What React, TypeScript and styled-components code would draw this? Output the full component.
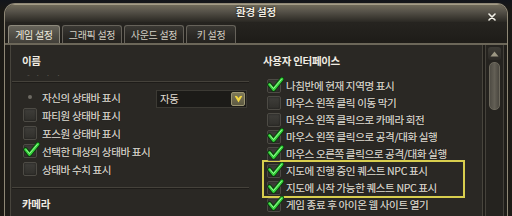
import React from 'react';
import styled, {createGlobalStyle} from 'styled-components';

const GlobalStyle = createGlobalStyle`
	html, body {
		margin: 0;
		padding: 0;
		background: #14130f;
	}
	body {
		font-family: "Noto Sans CJK KR", "Noto Sans", sans-serif;
	}
`;

type Option = {
	label: string;
	checked: boolean;
	highlight?: boolean;
};

const leftOptions: Option[] = [
	{label: '파티원 상태바 표시', checked: false},
	{label: '포스원 상태바 표시', checked: false},
	{label: '선택한 대상의 상태바 표시', checked: true},
	{label: '상태바 수치 표시', checked: false},
];

const rightOptions: Option[] = [
	{label: '나침반에 현재 지역명 표시', checked: true},
	{label: '마우스 왼쪽 클릭 이동 막기', checked: false},
	{label: '마우스 왼쪽 클릭으로 카메라 회전', checked: false},
	{label: '마우스 왼쪽 클릭으로 공격/대화 실행', checked: true},
	{label: '마우스 오른쪽 클릭으로 공격/대화 실행', checked: true},
	{label: '지도에 진행 중인 퀘스트 NPC 표시', checked: true, highlight: true},
	{label: '지도에 시작 가능한 퀘스트 NPC 표시', checked: true, highlight: true},
	{label: '게임 종료 후 아이온 웹 사이트 열기', checked: true},
];

const tabs = [
	{label: '게임 설정', width: 52, active: true},
	{label: '그래픽 설정', width: 60, active: false},
	{label: '사운드 설정', width: 60, active: false},
	{label: '키 설정', width: 50, active: false},
];

const CheckMark = () => (
	<svg width="17" height="15" viewBox="0 0 17 15">
		<path d="M2.5 7.5 L6.5 12.5 L15 2" fill="none" stroke="#0b3a0c" strokeWidth="4.6" strokeLinecap="round" strokeLinejoin="round"/>
		<path d="M2.5 7.5 L6.5 12.5 L15 2" fill="none" stroke="#34d23a" strokeWidth="2.8" strokeLinecap="round" strokeLinejoin="round"/>
		<path d="M3.2 7.6 L6.5 11.6 L14.4 2.4" fill="none" stroke="#a8f7a4" strokeWidth="0.9" strokeLinecap="round" strokeLinejoin="round"/>
	</svg>
);

const Checkbox = ({checked}: {checked: boolean}) => (
	<Box>
		{checked && <Check><CheckMark/></Check>}
	</Box>
);

const OptionRow = ({option, pitch}: {option: Option; pitch: number}) => (
	<Row pitch={pitch}>
		<Checkbox checked={option.checked}/>
		<Label>{option.label}</Label>
	</Row>
);

const App = () => {
	const plain = rightOptions.slice(0, 5);
	const marked = rightOptions.filter(o => o.highlight);
	const rest = rightOptions.slice(7);

	return (
		<>
			<GlobalStyle/>
			<Screen>
				<Window>
					<TitleBar>
						<span/>
						<Title>환경 설정</Title>
						<Close aria-label="닫기">
							<svg width="8" height="8" viewBox="0 0 8 8">
								<path d="M1 1 L7 7 M7 1 L1 7" stroke="#f2f0e8" strokeWidth="1.6" strokeLinecap="round"/>
							</svg>
						</Close>
					</TitleBar>
					<TabBar>
						{tabs.map(tab => (
							<Tab key={tab.label} active={tab.active} width={tab.width}>{tab.label}</Tab>
						))}
					</TabBar>
					<Body>
						<Panels>
							<LeftColumn>
								<Heading>이름</Heading>
								<DimRow>- · · ·</DimRow>
								<Separator/>
								<Row pitch={18}>
									<DotSlot><Dot/></DotSlot>
									<Label>자신의 상태바 표시</Label>
									<Select>
										<SelectText>자동</SelectText>
										<SelectArrow>
											<svg width="9" height="8" viewBox="0 0 9 8">
												<path d="M0.8 1.2 Q2.5 0 4.5 3 Q6.5 0 8.2 1.2 L4.5 7.4 Z" fill="#f2d640"/>
											</svg>
										</SelectArrow>
									</Select>
								</Row>
								{leftOptions.map(o => <OptionRow key={o.label} option={o} pitch={18}/>)}
								<Separator gap={9}/>
								<Heading gap={2}>카메라</Heading>
								<Separator gap={8}/>
							</LeftColumn>
							<RightColumn>
								<Heading>사용자 인터페이스</Heading>
								<List>
									{plain.map(o => <OptionRow key={o.label} option={o} pitch={17}/>)}
									<Highlight>
										{marked.map(o => <OptionRow key={o.label} option={o} pitch={17}/>)}
									</Highlight>
									{rest.map(o => <OptionRow key={o.label} option={o} pitch={17}/>)}
								</List>
							</RightColumn>
						</Panels>
						<Scrollbar>
							<ScrollUp>
								<svg width="9" height="6" viewBox="0 0 9 6">
									<path d="M4.5 0.5 L8.5 5.5 L0.5 5.5 Z" fill="#9d9884"/>
								</svg>
							</ScrollUp>
							<Thumb/>
						</Scrollbar>
					</Body>
				</Window>
			</Screen>
		</>
	);
};

const Screen = styled.div`
	width: 512px;
	height: 216px;
	overflow: hidden;
	box-sizing: border-box;
	padding: 3px 4px 0 4px;
	background: linear-gradient(180deg, #12151b 0, #1a1915 10px, #1e1b16 100%);
`;

const Window = styled.div`
	width: 504px;
	height: 240px;
	box-sizing: border-box;
	display: flex;
	flex-direction: column;
	border: 1px solid #8f8876;
	border-bottom: none;
	border-radius: 11px 11px 0 0;
	background: #1f1d19;
	overflow: hidden;
`;

const TitleBar = styled.div`
	height: 18px;
	display: grid;
	grid-template-columns: 1fr auto 1fr;
	align-items: center;
	background: linear-gradient(180deg, #736e5c 0%, #57534a 40%, #3d3a33 75%, #2a2823 100%);
	box-shadow: inset 0 1px 0 #a39c86;
`;

const Title = styled.div`
	font-size: 10.5px;
	font-weight: bold;
	letter-spacing: -0.2px;
	color: #f1ede2;
	line-height: 18px;
	margin-top: -3px;
	text-shadow: 0 0 2px #000;
`;

const Close = styled.div`
	justify-self: end;
	display: flex;
	width: 8px;
	height: 8px;
	margin: 7px 11px 0 0;
`;

const TabBar = styled.div`
	height: 21px;
	display: flex;
	align-items: flex-end;
	gap: 2px;
	padding-left: 3px;
	border-bottom: 2px solid #6c6759;
	background: linear-gradient(180deg, #262420, #1e1c18);
`;

const Tab = styled.div<{active: boolean; width: number}>`
	box-sizing: border-box;
	width: ${props => props.width}px;
	height: 18px;
	display: flex;
	align-items: center;
	justify-content: center;
	border: 1px solid ${props => props.active ? '#8d897c' : '#66625a'};
	border-bottom: none;
	border-radius: 3px 3px 0 0;
	background: ${props => props.active
		? 'linear-gradient(180deg, #67645a 0%, #4f4d45 55%, #423f39 100%)'
		: 'linear-gradient(180deg, #3a3833 0%, #2a2824 60%, #24221e 100%)'};
	color: ${props => props.active ? '#eeeadf' : '#d3cfc3'};
	font-size: 10px;
	letter-spacing: -0.3px;
	padding-bottom: 1px;
`;

const Body = styled.div`
	flex: 1;
	display: flex;
	padding: 0 3px 0 5px;
	gap: 2px;
`;

const Panels = styled.div`
	display: flex;
	border-left: 1px solid #48453d;
	border-right: 1px solid #48453d;
	background: #2a2824;
`;

const LeftColumn = styled.div`
	width: 240px;
	box-sizing: border-box;
	padding: 0 4px 0 11px;
	display: flex;
	flex-direction: column;
`;

const RightColumn = styled.div`
	width: 231px;
	box-sizing: border-box;
	padding: 0 4px 0 12px;
	display: flex;
	flex-direction: column;
`;

const Heading = styled.div<{gap?: number}>`
	margin-top: ${props => props.gap ?? 8}px;
	height: 16px;
	line-height: 16px;
	font-size: 10.5px;
	font-weight: bold;
	letter-spacing: -0.3px;
	color: #f0ece3;
`;

const DimRow = styled.div`
	height: 12px;
	line-height: 12px;
	padding-left: 5px;
	font-size: 8px;
	letter-spacing: 2px;
	color: #5c5951;
`;

const Separator = styled.div<{gap?: number}>`
	margin: ${props => props.gap ?? 0}px -2px 6px -10px;
	border-top: 1px solid #45423b;
	box-shadow: 0 1px 0 #1e1c19;
`;

const Row = styled.div<{pitch: number}>`
	height: ${props => props.pitch}px;
	display: flex;
	align-items: center;
	gap: 5px;
	padding-left: 1px;
`;

const Label = styled.span`
	font-size: 10.5px;
	letter-spacing: -0.35px;
	color: #d9d5cb;
	white-space: nowrap;
	text-shadow: 0 0 1px #111, 0 0 0.4px #d9d5cb;
`;

const Box = styled.div`
	position: relative;
	width: 14px;
	height: 14px;
	flex: none;
	box-sizing: border-box;
	border: 1px solid #4d4b45;
	border-radius: 2px;
	background: linear-gradient(180deg, #3f3e3a, #302f2b);
	box-shadow: inset 0 0 2px #1a1917;
`;

const Check = styled.div`
	position: absolute;
	left: -1px;
	top: -3px;
	display: flex;
`;

const DotSlot = styled.div`
	width: 14px;
	height: 14px;
	flex: none;
	display: flex;
	align-items: center;
	justify-content: center;
`;

const Dot = styled.div`
	width: 4px;
	height: 4px;
	border-radius: 50%;
	background: #6d6a63;
`;

const Select = styled.div`
	margin-left: auto;
	margin-top: 3px;
	width: 91px;
	height: 18px;
	box-sizing: border-box;
	display: flex;
	align-items: center;
	justify-content: space-between;
	padding: 0 1px 0 3px;
	border: 1px solid #3c3a34;
	background: #1c1b18;
`;

const SelectText = styled.span`
	font-size: 10.5px;
	letter-spacing: -0.4px;
	color: #e2ded4;
`;

const SelectArrow = styled.div`
	width: 14px;
	height: 14px;
	box-sizing: border-box;
	display: flex;
	align-items: center;
	justify-content: center;
	border: 1px solid #9b9572;
	border-radius: 2px;
	background: linear-gradient(180deg, #7d7858, #5d5942);
`;

const List = styled.div`
	margin-top: 8px;
	padding-left: 3px;
	display: flex;
	flex-direction: column;
`;

const Highlight = styled.div`
	width: 203px;
	box-sizing: border-box;
	margin: -2px 0 -2px -4px;
	padding-left: 2px;
	border: 2px solid #d8ce4e;
`;

const Scrollbar = styled.div`
	width: 19px;
	box-sizing: border-box;
	display: flex;
	flex-direction: column;
	align-items: center;
	padding-top: 2px;
	border: 1px solid #45423b;
	border-top: none;
	background: #25231f;
`;

const ScrollUp = styled.div`
	height: 13px;
	width: 13px;
	display: flex;
	align-items: center;
	justify-content: center;
	border-radius: 3px;
	background: linear-gradient(180deg, #3e3c36, #2c2a26);
`;

const Thumb = styled.div`
	margin-top: 2px;
	width: 11px;
	height: 48px;
	box-sizing: border-box;
	border: 1px solid #6d695d;
	border-radius: 5px;
	background: linear-gradient(90deg, #4f4c44, #635f55 50%, #4a473f);
`;

export default App;
